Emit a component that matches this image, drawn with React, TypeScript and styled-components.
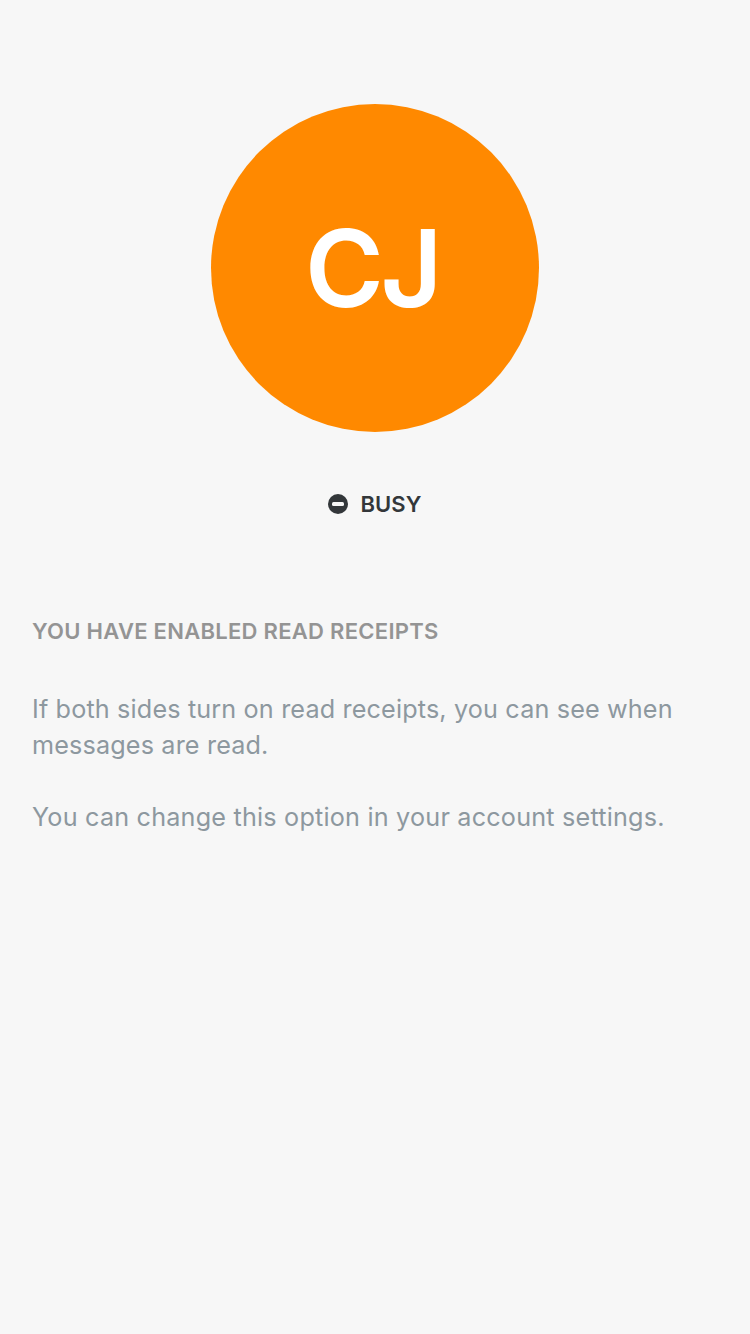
import React from "react";
import styled, { createGlobalStyle } from "styled-components";

const GlobalStyle = createGlobalStyle`
  body {
    margin: 0;
    background: #f7f7f7;
    font-family: Inter, "Liberation Sans", sans-serif;
  }
`;

const Screen = styled.main`
  box-sizing: border-box;
  min-height: 1334px;
  padding: 104px 32px 0;
  display: flex;
  flex-direction: column;
  background: #f7f7f7;
`;

const Avatar = styled.div`
  align-self: center;
  display: flex;
  align-items: center;
  justify-content: center;
  width: 328px;
  height: 328px;
  border-radius: 50%;
  background: #ff8900;
  color: #fff;
`;

const Initials = styled.span`
  margin-right: 6px;
  font-size: 107px;
  font-weight: 600;
  line-height: 130px;
  letter-spacing: -3.5px;
`;

const Availability = styled.div`
  display: flex;
  align-items: center;
  justify-content: center;
  gap: 12px;
  height: 28px;
  margin-top: 58px;
  color: #33373a;
`;

const AvailabilityLabel = styled.span`
  font-size: 22px;
  font-weight: 600;
  line-height: 28px;
  letter-spacing: 0.1px;
`;

const SectionTitle = styled.h2`
  margin: 99px 0 0;
  color: #949494;
  font-size: 22px;
  font-weight: 600;
  line-height: 28px;
  letter-spacing: 0.28px;
  white-space: nowrap;
`;

const Paragraph = styled.p<{ $offset: number; $tracking: number }>`
  margin: ${({ $offset }) => $offset}px 0 0;
  color: #8d989f;
  font-size: 25.2px;
  line-height: 36px;
  letter-spacing: ${({ $tracking }) => $tracking}px;
`;

const BusyIcon = () => (
  <svg width="20" height="20" viewBox="0 0 20 20" aria-hidden="true">
    <circle cx="10" cy="10" r="10" fill="#33373a" />
    <rect x="4" y="8" width="12" height="4" rx="1.5" fill="#f7f7f7" />
  </svg>
);

export default function App() {
  return (
    <>
      <GlobalStyle />
      <Screen>
        <Avatar>
          <Initials>CJ</Initials>
        </Avatar>
        <Availability>
          <BusyIcon />
          <AvailabilityLabel>BUSY</AvailabilityLabel>
        </Availability>
        <SectionTitle>YOU HAVE ENABLED READ RECEIPTS</SectionTitle>
        <Paragraph $offset={46} $tracking={0.15}>
          If both sides turn on read receipts, you can see when
          <br />
          messages are read.
        </Paragraph>
        <Paragraph $offset={36} $tracking={0.2}>
          You can change this option in your account settings.
        </Paragraph>
      </Screen>
    </>
  );
}
